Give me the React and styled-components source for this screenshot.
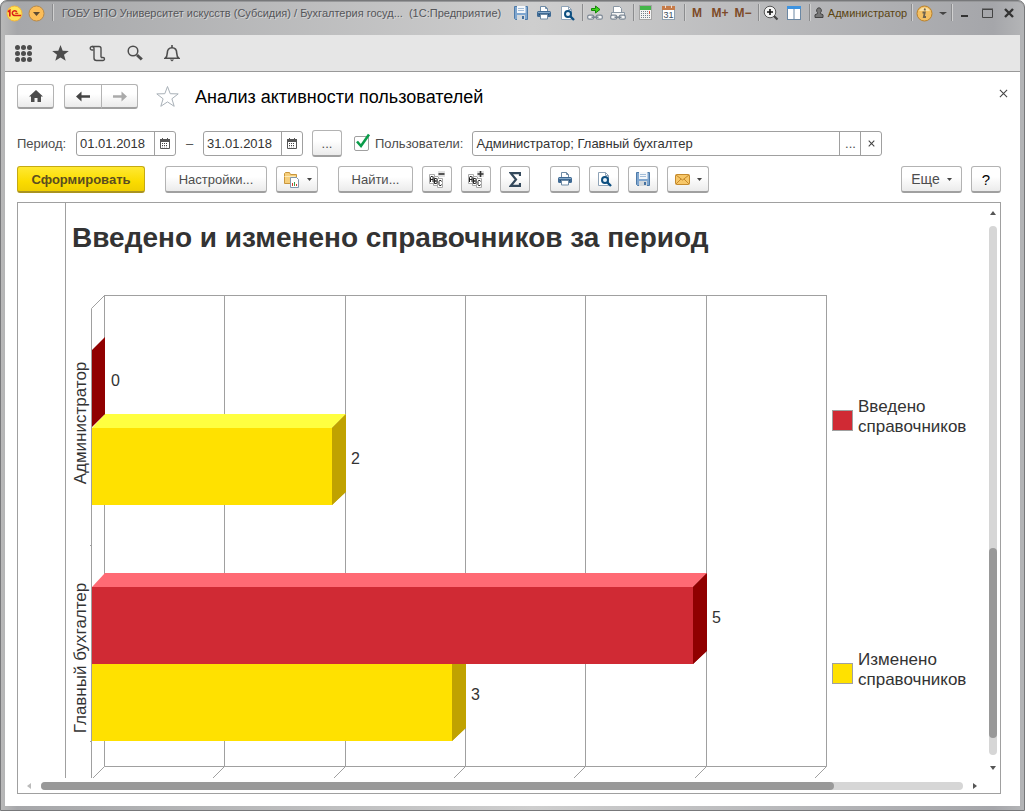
import React, { useState } from "react";
import styled, { createGlobalStyle } from "styled-components";

const lineColor = "#a0a0a0";
const textColor = "#4d4d4d";
const darkText = "#333333";
const brown = "#7d4a28";

const GlobalStyle = createGlobalStyle`
    * {
        box-sizing: border-box;
    }
    body {
        margin: 0;
        background-color: #ffffff;
        font-family: "Liberation Sans", Arial, sans-serif;
        font-size: 13px;
        color: ${textColor};
    }
    button, input {
        font-family: inherit;
        font-size: inherit;
        color: inherit;
    }
    button {
        cursor: pointer;
    }
    svg {
        display: block;
        flex: none;
    }
`;

const Window = styled.div`
    height: 100vh;
    display: flex;
    flex-direction: column;
    padding: 0 4px 4px 4px;
    border: 1px solid #77787a;
    border-radius: 7px 7px 0 0;
    background: linear-gradient(90deg, #b9b9b9 0, #a6a7aa 16px, #abacae 80px, #cecece 52%, #a5a6aa 97%, #b4b5b7 100%);
    box-shadow: inset 0 1px 0 #97989a;
`;

const TitleBar = styled.header`
    height: 34px;
    display: flex;
    align-items: flex-start;
    flex: none;
`;

const TitleText = styled.div`
    flex: 1;
    min-width: 0;
    overflow: hidden;
    white-space: pre;
    line-height: 25px;
    padding-left: 7px;
    font-size: 11px;
    color: #55565a;
    text-shadow: 1px 1px 0 #d4d4d4;
`;

const TitleButton = styled.button`
    width: ${(p) => p.$width || 23}px;
    height: 24px;
    padding: ${(p) => (p.$width ? "0" : "0 3px 0 0")};
    border: none;
    background: none;
    display: flex;
    align-items: center;
    justify-content: center;
    gap: 4px;
    flex: none;
`;

const MemoryButton = styled(TitleButton)`
    font-size: 12px;
    font-weight: bold;
    color: ${brown};
`;

const UserButton = styled(TitleButton)`
    font-size: 11px;
    color: #5a4410;
`;

const TitleSeparator = styled.span`
    width: 1px;
    height: 17px;
    margin: 3px 2px;
    background-color: #8b8c8e;
    box-shadow: 1px 0 0 #d0d0d0;
    flex: none;
`;

const SectionBar = styled.nav`
    height: 37px;
    display: flex;
    align-items: center;
    background-color: #e6e6e6;
    border-bottom: 1px solid #999999;
    flex: none;
`;

const SectionButton = styled.button`
    width: 37px;
    height: 36px;
    padding: 0;
    border: none;
    background: none;
    display: flex;
    align-items: center;
    justify-content: center;
`;

const Page = styled.main`
    flex: 1;
    min-height: 0;
    display: flex;
    flex-direction: column;
    gap: 9px;
    padding: 12px 19px 12px 12px;
    background-color: #ffffff;
`;

const Header = styled.div`
    display: flex;
    align-items: center;
    height: 25px;
    margin-bottom: 12px;
`;

const Title = styled.h1`
    margin: 0;
    flex: 1;
    padding-top: 2px;
    font-size: 18px;
    font-weight: normal;
    color: #000000;
`;

const Row = styled.div`
    display: flex;
    align-items: center;
    height: 27px;
    gap: 9px;
    flex: none;
`;

const Button = styled.button`
    min-width: ${(p) => p.$width || 30}px;
    height: ${(p) => p.$height || 27}px;
    padding: 0;
    display: flex;
    align-items: center;
    justify-content: center;
    gap: 7px;
    border: 1px solid #b3b3b3;
    border-bottom: 2px solid #a0a0a0;
    border-radius: 3px;
    background: linear-gradient(#ffffff 40%, #ebebeb);
    flex: none;
`;

const PrimaryButton = styled(Button)`
    font-weight: bold;
    color: #5a4d20;
    border-color: #c5aa12;
    border-bottom-color: #a99320;
    background: linear-gradient(#ffe933, #fbdc00 60%, #f0cf00);
`;

const MoreButton = styled(Button)`
    font-size: 14px;
`;

const HelpButton = styled(Button)`
    font-size: 15px;
    color: #000000;
`;

const ButtonPair = styled.div`
    display: flex;
    margin: 0 17px 0 10px;
    button + button {
        margin-left: -1px;
        border-radius: 0 3px 3px 0;
    }
    button:first-child {
        border-radius: 3px 0 0 3px;
    }
`;

const PlainButton = styled.button`
    border: none;
    background: none;
    padding: 0;
    display: flex;
    align-items: center;
    justify-content: center;
`;

const StarButton = styled(PlainButton)`
    margin-right: 15px;
`;

const CloseButton = styled(PlainButton)`
    width: 15px;
    height: 15px;
    margin: -7px -10px 0 0;
`;

const Space = styled.span`
    width: 2px;
    flex: none;
`;

const Dash = styled.span`
    width: 9px;
    text-align: center;
`;

const Spring = styled.span`
    flex: 1;
`;

const Field = styled.div`
    width: ${(p) => p.$width}px;
    min-width: 0;
    height: 25px;
    display: flex;
    border: 1px solid ${lineColor};
    border-radius: 3px;
    background-color: #ffffff;
`;

const FieldInput = styled.input`
    flex: 1;
    min-width: 0;
    width: 0;
    border: none;
    outline: none;
    padding: 0 3px;
    background: none;
    color: ${darkText};
`;

const FieldButton = styled(PlainButton)`
    width: 21px;
    border-left: 1px solid ${lineColor};
`;

const Period = styled.label`
    width: 50px;
`;

const CheckLabel = styled.label`
    display: flex;
    align-items: center;
    gap: 6px;
    margin-left: 3px;
`;

const CheckHolder = styled.span`
    position: relative;
    display: flex;
    svg {
        position: absolute;
        left: 1px;
        top: -3px;
        pointer-events: none;
    }
`;

const Check = styled.input`
    appearance: none;
    width: 15px;
    height: 15px;
    margin: 0;
    border: 1px solid ${lineColor};
    border-radius: 2px;
    background-color: #ffffff;
`;

const Report = styled.section`
    flex: 1;
    min-height: 0;
    display: grid;
    grid-template-columns: minmax(0, 1fr) 15px;
    grid-template-rows: minmax(0, 1fr) 15px;
    border: 1px solid ${lineColor};
`;

const Sheet = styled.div`
    display: flex;
    overflow: hidden;
`;

const Gutter = styled.div`
    width: 48px;
    border-right: 1px solid ${lineColor};
    flex: none;
`;

const SheetBody = styled.div`
    flex: 1;
    min-width: 0;
`;

const ReportTitle = styled.h2`
    margin: 0;
    padding: 15px 0 0 6px;
    height: 75px;
    line-height: 40px;
    font-size: 28px;
    white-space: nowrap;
    color: ${darkText};
`;

const ChartRow = styled.div`
    display: flex;
    height: 500px;
    gap: 4px;
`;

const Legend = styled.ul`
    list-style: none;
    margin: 0;
    padding: 16px 0 0 0;
    flex: 1;
    display: flex;
    flex-direction: column;
`;

const LegendItem = styled.li`
    height: 253px;
    display: flex;
    align-items: center;
    gap: 5px;
    flex: none;
    font-size: 17px;
    line-height: 20px;
    color: ${darkText};
`;

const LegendText = styled.span`
    padding-bottom: 7px;
`;

const Swatch = styled.span`
    width: 21px;
    height: 21px;
    border: 1px solid ${lineColor};
    background-color: ${(p) => p.$color};
    flex: none;
`;

const Scroll = styled.div`
    display: flex;
    flex-direction: ${(p) => (p.$vertical ? "column" : "row")};
    align-items: center;
    ${(p) => (p.$vertical ? "padding: 2px 0 3px;" : "padding: 0 1px 0 2px;")}
`;

const ScrollArrow = styled(PlainButton)`
    width: ${(p) => (p.$vertical ? 15 : 18)}px;
    height: 15px;
    flex: none;
`;

const Track = styled.div`
    flex: 1;
    display: flex;
    flex-direction: ${(p) => (p.$vertical ? "column" : "row")};
    ${(p) => (p.$vertical ? "width: 8px; margin: 6px 0 5px;" : "height: 8px; margin: 0 3px;")}
    border-radius: 4px;
    background-color: #d6d6d6;
`;

const Thumb = styled.div`
    flex: 0 0 ${(p) => p.$size}%;
    margin-${(p) => (p.$vertical ? "top" : "left")}: auto;
    margin-${(p) => (p.$vertical ? "bottom" : "right")}: ${(p) => p.$rest}px;
    border-radius: 4px;
    background-color: #999999;
`;

/* icons */

const SaveIcon = () => (
    <svg width="16" height="16" viewBox="0 0 16 16">
        <path d="M1.500 1.500h13v13h-12l-1-1z" fill="#7fa6cf" stroke="#4d7aa8" />
        <path d="M4 1h8.500v7H4z" fill="#f4f7fa" />
        <path d="M5 3.500h6M5 5.500h6" stroke="#a3bdd8" />
        <path d="M4 10h8v5H4z" fill="#d3d8dc" />
        <path d="M9 11h2v3H9z" fill="#45719f" />
    </svg>
);

const PrintIcon = () => (
    <svg width="16" height="16" viewBox="0 0 16 16">
        <path d="M4.500 7V1.500h5l2 2V7" fill="#fff" stroke="#6f8ba5" />
        <path d="M9.500 1.500v2h2" fill="none" stroke="#6f8ba5" />
        <rect x="1" y="6" width="14" height="6" rx="1.500" fill="#3f6a94" />
        <path d="M2 7.500h12" stroke="#86a9c9" />
        <path d="M3 9.500h10" stroke="#234a70" />
        <path d="M4.500 9.500h7v4.500h-7z" fill="#fff" stroke="#6f8ba5" />
    </svg>
);

const PreviewIcon = () => (
    <svg width="16" height="16" viewBox="0 0 16 16">
        <path d="M2.500 1.500h7l3 3v10h-10z" fill="#fff" stroke="#8fa3b7" />
        <path d="M9.500 1.500v3h3" fill="none" stroke="#8fa3b7" />
        <circle cx="9" cy="9" r="3" fill="#e9f1f8" stroke="#0d4f80" strokeWidth="2" />
        <path d="M11.300 11.300L15 15" stroke="#0d4f80" strokeWidth="2.400" />
    </svg>
);

const chain = (
    <g fill="none" stroke="#7b8794" strokeWidth="1.200">
        <rect x="0.700" y="10.200" width="6" height="4" rx="1.500" fill="#f5f5f5" />
        <rect x="9.300" y="10.200" width="6" height="4" rx="1.500" fill="#f5f5f5" />
        <path d="M4.500 12.200h7" strokeWidth="1.600" />
    </g>
);

const LinkGoIcon = () => (
    <svg width="16" height="16" viewBox="0 0 16 16">
        {chain}
        <path d="M4.500 3.500h4v-2.500l4.500 3.500-4.500 3.500V5.500h-4z" fill="#3fd41c" stroke="#158808" />
    </svg>
);

const LinkPrintIcon = () => (
    <svg width="16" height="16" viewBox="0 0 16 16">
        <path d="M3.500 8V1.500h6l2 2V8" fill="#fff" stroke="#8996a3" />
        <path d="M1.500 12V7.500h13V12" fill="#f3f3f3" stroke="#8996a3" />
        {chain}
    </svg>
);

const CalcIcon = () => (
    <svg width="14" height="16" viewBox="0 0 14 16">
        <rect x="0.500" y="0.500" width="12" height="14" fill="#f4f4f4" stroke="#a5a5a5" />
        <rect x="1" y="1" width="11" height="4" fill="#43b649" />
        <path d="M2 6.500h9M2 8.500h9M2 10.500h9M2 12.500h9" stroke="#74808a" strokeDasharray="1 1" />
        <rect x="10" y="6" width="1" height="3" fill="#e2543f" />
    </svg>
);

const CalendarIcon = () => (
    <svg width="14" height="16" viewBox="0 0 14 16">
        <rect x="0.500" y="2.500" width="12" height="12" fill="#fff" stroke="#8fa0af" />
        <rect x="0" y="1" width="13" height="4" fill="#c67b49" />
        <path d="M3.500 0v3M9.500 0v3" stroke="#f0d9c8" />
        <text x="6.500" y="13" textAnchor="middle" fontSize="9" fill="#3c4c5c">31</text>
    </svg>
);

const ZoomIcon = () => (
    <svg width="16" height="16" viewBox="0 0 16 16">
        <path d="M11 11l3.500 3.500" stroke="#444" strokeWidth="2.200" />
        <circle cx="7" cy="7" r="5.800" fill="#f4f4f4" stroke="#555" />
        <path d="M4 7h6M7 4v6" stroke="#111" strokeWidth="1.600" />
    </svg>
);

const PanelsIcon = () => (
    <svg width="16" height="16" viewBox="0 0 16 16">
        <rect x="1.500" y="1.500" width="13" height="13" fill="#fff" stroke="#6b87a3" />
        <rect x="1" y="1" width="14" height="3" fill="#3e93e0" />
        <path d="M8 4v11" stroke="#6b87a3" />
    </svg>
);

const UserIcon = () => (
    <svg width="10" height="12" viewBox="0 0 10 12">
        <path d="M5 .8a2.400 2.700 0 0 1 1.500 4.800v1l2.500 1.200v2.700H1V7.800l2.500-1.200v-1A2.400 2.700 0 0 1 5 .8z" fill="#777" stroke="#444" />
    </svg>
);

const InfoIcon = () => (
    <svg width="17" height="17" viewBox="0 0 17 17">
        <circle cx="8.500" cy="8.500" r="7.500" fill="#f4c063" stroke="#b9812b" />
        <path d="M3 6a6 6 0 0 1 11 0z" fill="#fae0a5" />
        <path d="M6.500 7.500h2.300l-1 4.500H10M9 3.500l-.4 2" fill="none" stroke="#6c6250" strokeWidth="1.800" />
    </svg>
);

const LogoIcon = () => (
    <svg width="17" height="17" viewBox="0 0 17 17">
        <circle cx="8.500" cy="8.500" r="7.500" fill="#ffe356" stroke="#f3b43b" />
        <path d="M2 6.800l1.800-1.300v6" fill="none" stroke="#d9201a" strokeWidth="1.700" />
        <path d="M10.800 7A2.400 2.400 0 1 0 8.700 10.600H15" fill="none" stroke="#d9201a" strokeWidth="1.500" />
        <path d="M9.200 8.300h3" stroke="#d9201a" />
    </svg>
);

const MenuIcon = () => (
    <svg width="17" height="17" viewBox="0 0 17 17">
        <circle cx="8.500" cy="8.500" r="7.500" fill="#fbbd59" stroke="#b78949" />
        <path d="M5 7h7l-3.500 4z" fill="#5d4a32" />
    </svg>
);

const Caret = ({ color = "#444", size = 5 }) => (
    <svg width={size} height="3" viewBox="0 0 6 3" preserveAspectRatio="none">
        <path d="M0 0h6L3 3z" fill={color} />
    </svg>
);

const Cross = ({ size, width = 1.2, color = "#444" }) => (
    <svg width={size} height={size} viewBox="0 0 10 10">
        <path d="M1 1l8 8M9 1L1 9" stroke={color} strokeWidth={width} />
    </svg>
);

const SmallCalendar = () => (
    <svg width="10" height="11" viewBox="0 0 10 11">
        <path d="M.5 2h9v8.500h-9z" fill="none" stroke="#555" />
        <path d="M0 1h10v3H0zM2 0h1v2H2zM7 0h1v2H7z" fill="#555" />
        <path d="M2 5.500h6M2 7.500h6" stroke="#444" strokeDasharray="1 1" />
        <path d="M2 9h6" stroke="#aaa" strokeDasharray="1 1" />
    </svg>
);

const Arrow = ({ color, flip }) => (
    <svg width="14" height="11" viewBox="0 0 14 11">
        <path
            d={flip ? "M14 5.500L8.500 .5v3.700H0v2.600h8.500v3.700z" : "M0 5.500L5.500 .5v3.700H14v2.600H5.500v3.700z"}
            fill={color}
        />
    </svg>
);

const FolderIcon = () => (
    <svg width="17" height="17" viewBox="0 0 17 17">
        <path d="M1.500 12.500v-10l1-1h4l1 2h6v9z" fill="#f6cf7c" stroke="#c9963c" />
        <path d="M1.500 5.500h11" stroke="#fdeab8" />
        <path d="M7.500 6.500h6l2 2v8h-8z" fill="#fff" stroke="#7f97ad" />
        <path d="M9.500 15v-3M13.500 15v-2" stroke="#d43a2d" />
        <path d="M11.500 15v-4" stroke="#3f9d4c" />
    </svg>
);

const GroupIcon = ({ plus }) => (
    <svg width="16" height="17" viewBox="0 0 16 17">
        <g fill="#fff" stroke="#aaaaaa">
            <path d="M.5 3.500h5v9h-5zM4.500 5.500h5v9h-5z" />
            <path d="M8.500 7.500h5v9h-5z" />
        </g>
        <g fill="none" stroke="#222">
            <path d="M1.500 11V6.500l.5-1h1.500l.5 1V11M1.500 8.500h2.500" />
            <path d="M5.500 12.500v-5h2l.5 1v1l-.5.500h-2h2l.5.500v1.500l-.5.500z" />
            <path d="M12.500 10.500l-.5-1h-1.500l-.5 1v3l.5 1h1.500l.5-1" />
        </g>
        <path d="M9 0h7v6H9z" fill="#e2e2e2" />
        <path d={plus ? "M9.500 3h6M12.500 0v6" : "M9.500 3h6"} stroke="#333" strokeWidth="1.600" />
    </svg>
);

const SigmaIcon = () => (
    <svg width="12" height="15" viewBox="0 0 12 15">
        <path d="M11 4V1.200H1.800L7 7.500l-5.200 6.300H11V11" fill="none" stroke="#34495c" strokeWidth="2.200" />
    </svg>
);

const MailIcon = () => (
    <svg width="15" height="11" viewBox="0 0 15 11">
        <rect x="0.500" y="0.500" width="14" height="10" rx="1" fill="#f7c769" stroke="#c58a2c" />
        <path d="M1 1l6.500 5L14 1M1 10l5-5M14 10L9 5" fill="none" stroke="#c58a2c" />
    </svg>
);

const Triangle = ({ dir, color = "#555" }) => {
    const shapes = {
        up: "M3 1L6 5H0z",
        down: "M0 1h6L3 5z",
        left: "M1 3L5 0v6z",
        right: "M5 3L1 0v6z",
    };
    return (
        <svg width="6" height="6" viewBox="0 0 6 6">
            <path d={shapes[dir]} fill={color} />
        </svg>
    );
};

/* chart */

const series = [
    { name: ["Введено", "справочников"], front: "#d02a34", top: "#ff6a74", side: "#900000" },
    { name: ["Изменено", "справочников"], front: "#ffe100", top: "#ffff40", side: "#c0a200" },
];

const categories = [
    { name: "Администратор", values: [0, 2], y: 72, labelY: 145 },
    { name: "Главный бухгалтер", values: [5, 3], y: 309, labelY: 380 },
];

const depth = 13;
const barHeight = 77;
const left = 26;
const scaleX = (value) => Math.round((value * 722) / 6);

const Bar = ({ value, y, colors }) => {
    const end = value ? left + scaleX(value) - 1 : left;
    const bottom = y + barHeight;
    return (
        <g>
            <path d={`M${left} ${y}l${depth} ${-depth - 1}H${end + depth + 1}L${end} ${y}z`} fill={value ? colors.top : "none"} />
            <path d={`M${end} ${y}l${depth} ${-depth}V${bottom - depth}L${end} ${bottom}z`} fill={colors.side} />
            {value > 0 && (
                <path d={`M${end} ${y}l${depth + 1} ${-depth - 1}V${bottom - depth}L${end} ${bottom}z`} fill={colors.side} />
            )}
            <rect x={left} y={y} width={end - left} height={barHeight} fill={colors.front} />
            <text x={end + 19} y={y + 36} fontSize="16" fill={darkText}>
                {value}
            </text>
        </g>
    );
};

const Chart = () => (
    <svg width="762" height="500" viewBox="0 0 762 500">
        <g stroke={lineColor} fill="none">
            <path d="M38.500 17.500H760.500V488.500H38.500z" />
            {[0, 1, 2, 3, 4, 5, 6].map((n) => (
                <g key={n}>
                    <path d={`M${38.5 + scaleX(n)} 17V488`} />
                    <path d={`M${38.5 + scaleX(n)} 488.500l-13 13`} />
                </g>
            ))}
            <path d="M38.500 17.500l-13 13V500M24 267.500h2M24 463.500h2" />
        </g>
        {categories.map((c) => (
            <g key={c.name}>
                <Bar value={c.values[1]} y={c.y + barHeight + (c.values[0] ? 0 : 1)} colors={series[1]} />
                <Bar value={c.values[0]} y={c.y} colors={series[0]} />
                <text
                    transform={`translate(20 ${c.labelY}) rotate(-90)`}
                    textAnchor="middle"
                    fontSize="17"
                    fill={darkText}
                >
                    {c.name}
                </text>
            </g>
        ))}
    </svg>
);

export default function App() {
    const [from, setFrom] = useState("01.01.2018");
    const [to, setTo] = useState("31.01.2018");
    const [byUsers, setByUsers] = useState(true);
    const [users, setUsers] = useState("Администратор; Главный бухгалтер");

    return (
        <>
            <GlobalStyle />
            <Window>
                <TitleBar>
                    <TitleButton $width={18} aria-label="1С">
                        <LogoIcon />
                    </TitleButton>
                    <TitleButton $width={27} aria-label="Меню">
                        <MenuIcon />
                    </TitleButton>
                    <TitleSeparator />
                    <TitleText>
                        {"ГОБУ ВПО Университет искусств (Субсидия) / Бухгалтерия госуд...  (1С:Предприятие)"}
                    </TitleText>
                    <TitleButton aria-label="Сохранить"><SaveIcon /></TitleButton>
                    <TitleButton aria-label="Печать"><PrintIcon /></TitleButton>
                    <TitleButton aria-label="Просмотр"><PreviewIcon /></TitleButton>
                    <TitleSeparator />
                    <TitleButton aria-label="Перейти по ссылке"><LinkGoIcon /></TitleButton>
                    <TitleButton aria-label="Получить ссылку"><LinkPrintIcon /></TitleButton>
                    <TitleSeparator />
                    <TitleButton aria-label="Калькулятор"><CalcIcon /></TitleButton>
                    <TitleButton aria-label="Календарь"><CalendarIcon /></TitleButton>
                    <TitleSeparator />
                    <MemoryButton>M</MemoryButton>
                    <MemoryButton>M+</MemoryButton>
                    <MemoryButton>M−</MemoryButton>
                    <TitleSeparator />
                    <TitleButton aria-label="Масштаб"><ZoomIcon /></TitleButton>
                    <TitleButton aria-label="Панели"><PanelsIcon /></TitleButton>
                    <TitleSeparator />
                    <UserButton $width={97}>
                        <UserIcon />
                        Администратор
                    </UserButton>
                    <TitleSeparator />
                    <TitleButton aria-label="Справка"><InfoIcon /></TitleButton>
                    <TitleButton $width={12} aria-label="Ещё"><Caret size={8} /></TitleButton>
                    <TitleSeparator />
                    <TitleButton $width={22} aria-label="Свернуть">
                        <svg width="8" height="10"><path d="M0 8h7" stroke="#333" strokeWidth="2" /></svg>
                    </TitleButton>
                    <TitleButton $width={22} aria-label="Развернуть">
                        <svg width="11" height="10"><path d="M.5 1.500h10v8H.5zM0 1h11" fill="none" stroke="#444" /></svg>
                    </TitleButton>
                    <TitleButton $width={22} aria-label="Закрыть">
                        <Cross size={10} width={2.4} color="#333" />
                    </TitleButton>
                </TitleBar>

                <SectionBar>
                    <SectionButton aria-label="Разделы">
                        <svg width="17" height="17" fill="#4d4d4d">
                            {[2.5, 8.5, 14.5].map((x) =>
                                [2.5, 8.5, 14.5].map((y) => <circle key={`${x}-${y}`} cx={x} cy={y} r="2.500" />)
                            )}
                        </svg>
                    </SectionButton>
                    <SectionButton aria-label="Избранное">
                        <svg width="17" height="16" viewBox="0 0 17 16">
                            <path d="M8.500 0l2.200 5.700 6.100.3-4.800 3.800 1.700 6-5.200-3.400-5.200 3.400 1.700-6L.2 6l6.100-.3z" fill="#4d4d4d" />
                        </svg>
                    </SectionButton>
                    <SectionButton aria-label="История">
                        <svg width="17" height="17" viewBox="0 0 17 17" fill="none" stroke="#4d4d4d" strokeWidth="1.400">
                            <path d="M4.500 5H3a1.700 1.700 0 1 1 0-3.500h7q2 0 2 2v9" />
                            <path d="M3 1.500q2 0 2 2v9.500q0 2.500 2.500 2.500h6.500a1.500 1.500 0 1 0 0-3h-2" />
                        </svg>
                    </SectionButton>
                    <SectionButton aria-label="Поиск">
                        <svg width="16" height="16" viewBox="0 0 16 16">
                            <circle cx="6" cy="6" r="4.800" fill="none" stroke="#4d4d4d" strokeWidth="1.500" />
                            <path d="M10 10l4.800 4.500" stroke="#4d4d4d" strokeWidth="3" />
                        </svg>
                    </SectionButton>
                    <SectionButton aria-label="Оповещения">
                        <svg width="16" height="17" viewBox="0 0 16 17">
                            <path
                                d="M1 13.300c1.800-1.300 2.300-2.600 2.300-5.300 0-3.200 1.500-5.300 4.700-5.300s4.700 2.100 4.700 5.300c0 2.700.5 4 2.300 5.300z"
                                fill="none"
                                stroke="#4d4d4d"
                                strokeWidth="1.600"
                            />
                            <path d="M8 0v3" stroke="#4d4d4d" strokeWidth="1.600" />
                            <path d="M5.800 14.500h4.400L8 16.500z" fill="#4d4d4d" />
                        </svg>
                    </SectionButton>
                </SectionBar>

                <Page>
                    <Header>
                        <Button $width={37} $height={25} aria-label="Домой">
                            <svg width="14" height="12" viewBox="0 0 14 12">
                                <path d="M7 0l7 6.500h-2V12H8.500V8h-3v4H2V6.500H0z" fill="#4d4d4d" />
                            </svg>
                        </Button>
                        <ButtonPair>
                            <Button $width={38} $height={25} aria-label="Назад"><Arrow color="#444" /></Button>
                            <Button $width={37} $height={25} aria-label="Вперёд"><Arrow color="#aaa" flip /></Button>
                        </ButtonPair>
                        <StarButton aria-label="В избранное">
                            <svg width="25" height="23" viewBox="0 0 25 23">
                                <path
                                    d="M12.500 1.500l2.700 7.200 8 .2-6.300 4.900 2.300 7.500-6.700-4.400-6.700 4.400 2.300-7.500-6.300-4.900 8-.2z"
                                    fill="#fff"
                                    stroke="#a9b1b8"
                                />
                            </svg>
                        </StarButton>
                        <Title>Анализ активности пользователей</Title>
                        <CloseButton aria-label="Закрыть"><Cross size={9} /></CloseButton>
                    </Header>

                    <Row>
                        <Period htmlFor="from">Период:</Period>
                        <Field $width={100}>
                            <FieldInput id="from" value={from} onChange={(e) => setFrom(e.target.value)} />
                            <FieldButton aria-label="Выбрать начало"><SmallCalendar /></FieldButton>
                        </Field>
                        <Dash>–</Dash>
                        <Field $width={100}>
                            <FieldInput aria-label="Конец периода" value={to} onChange={(e) => setTo(e.target.value)} />
                            <FieldButton aria-label="Выбрать конец"><SmallCalendar /></FieldButton>
                        </Field>
                        <Button>...</Button>
                        <CheckLabel>
                            <CheckHolder>
                                <Check type="checkbox" checked={byUsers} onChange={(e) => setByUsers(e.target.checked)} />
                                {byUsers && (
                                    <svg width="16" height="16" viewBox="0 0 16 16">
                                        <path d="M2 8.500l4 4.500 8-11.500" fill="none" stroke="#0a9c4a" strokeWidth="2.600" />
                                    </svg>
                                )}
                            </CheckHolder>
                            Пользователи:
                        </CheckLabel>
                        <Field $width={410}>
                            <FieldInput aria-label="Пользователи" value={users} onChange={(e) => setUsers(e.target.value)} />
                            <FieldButton aria-label="Выбрать">...</FieldButton>
                            <FieldButton aria-label="Очистить" onClick={() => setUsers("")}><Cross size={7} width={1.5} /></FieldButton>
                        </Field>
                    </Row>

                    <Row>
                        <PrimaryButton $width={128}>Сформировать</PrimaryButton>
                        <Space />
                        <Button $width={102}>Настройки...</Button>
                        <Button $width={42} aria-label="Варианты отчёта"><FolderIcon /><Caret /></Button>
                        <Space />
                        <Button $width={75}>Найти...</Button>
                        <Button aria-label="Свернуть группы"><GroupIcon /></Button>
                        <Button aria-label="Развернуть группы"><GroupIcon plus /></Button>
                        <Button aria-label="Сумма"><SigmaIcon /></Button>
                        <Space />
                        <Button aria-label="Печать"><PrintIcon /></Button>
                        <Button aria-label="Просмотр"><PreviewIcon /></Button>
                        <Button aria-label="Сохранить"><SaveIcon /></Button>
                        <Button $width={42} aria-label="Отправить"><MailIcon /><Caret /></Button>
                        <Spring />
                        <MoreButton $width={61}>Еще<Caret /></MoreButton>
                        <HelpButton>?</HelpButton>
                    </Row>

                    <Report>
                        <Sheet>
                            <Gutter />
                            <SheetBody>
                                <ReportTitle>Введено и изменено справочников за период</ReportTitle>
                                <ChartRow>
                                    <Chart />
                                    <Legend>
                                        {series.map((s) => (
                                            <LegendItem key={s.name[0]}>
                                                <Swatch $color={s.front} />
                                                <LegendText>
                                                    {s.name[0]}
                                                    <br />
                                                    {s.name[1]}
                                                </LegendText>
                                            </LegendItem>
                                        ))}
                                    </Legend>
                                </ChartRow>
                            </SheetBody>
                        </Sheet>
                        <Scroll $vertical>
                            <ScrollArrow $vertical aria-label="Вверх"><Triangle dir="up" /></ScrollArrow>
                            <Track $vertical><Thumb $vertical $size={36} $rest={17} /></Track>
                            <ScrollArrow $vertical aria-label="Вниз"><Triangle dir="down" /></ScrollArrow>
                        </Scroll>
                        <Scroll>
                            <ScrollArrow aria-label="Влево"><Triangle dir="left" color="#bbb" /></ScrollArrow>
                            <Track><Thumb $size={86} $rest={129} /></Track>
                            <ScrollArrow aria-label="Вправо"><Triangle dir="right" /></ScrollArrow>
                        </Scroll>
                    </Report>
                </Page>
            </Window>
        </>
    );
}
